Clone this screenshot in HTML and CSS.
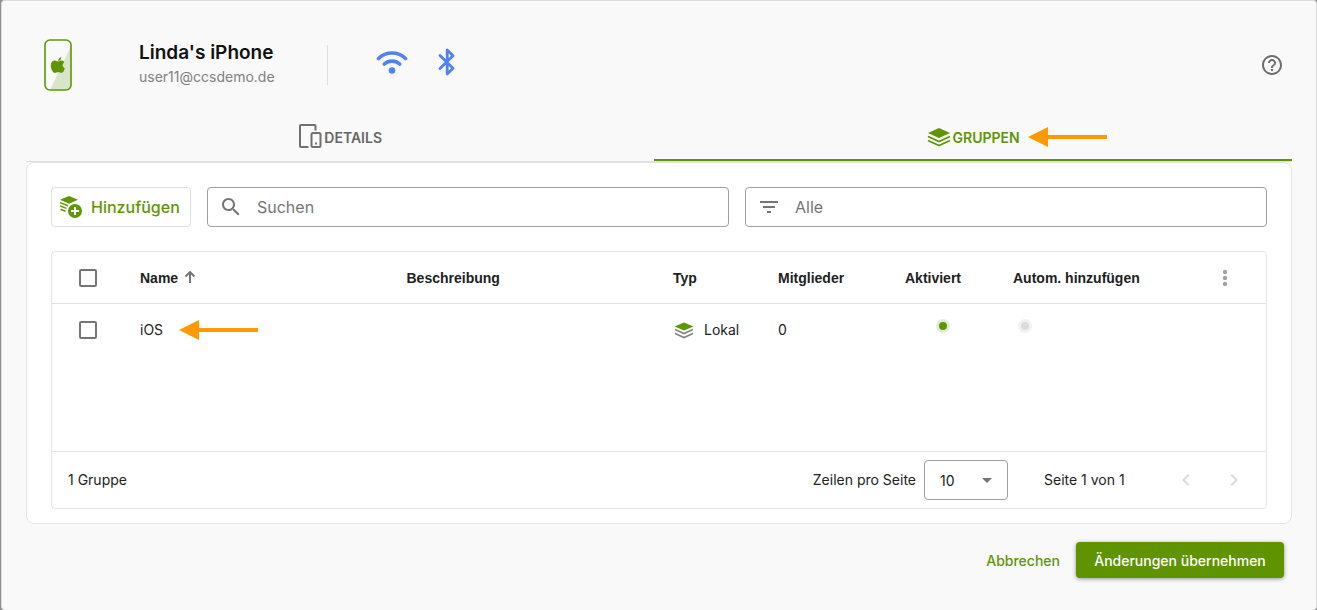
FILE: index.html
```html
<!DOCTYPE html>
<html lang="de">
<head>
    <meta charset="UTF-8">
    <meta name="viewport" content="width=device-width, initial-scale=1.0">
    <title>Linda's iPhone - Gruppen</title>
    <link rel="stylesheet" href="styles.css">
</head>
<body>

    <div class="dialog">
        <header class="device-header">
            <svg class="device-icon" width="28" height="52" viewBox="0 0 28 52" aria-hidden="true">
                <path d="M27 7v40a4 4 0 0 1-4 4H6z" fill="#d9e5c8"/>
                <rect x="1" y="1" width="26" height="50" rx="5" fill="none" stroke="#5f9606" stroke-width="1.6"/>
                <path d="M14.200 22c.1-2 1-3.300 3-4 .2 2-1 3.700-3 4z" fill="#5f9606"/>
                <path d="M14 22.500c1-.2 1.800-.9 3.300-.9 1.400 0 2.400.6 3.100 1.600-2.500 1.500-2.200 4.900.5 6-.6 2-1.900 4.800-3.600 4.800-1.200 0-1.600-.7-3.100-.7s-2 .7-3.200.7c-2.200 0-4.200-4.400-4.200-7.500 0-3.200 1.900-5 4.100-5 1.300 0 2.200.8 3.100 1z" fill="#5f9606"/>
            </svg>
            <div class="device-title">
                <h1>Linda's iPhone</h1>
                <p>user11@ccsdemo.de</p>
            </div>
            <div class="device-status">
                <svg width="32" height="26" viewBox="0 0 32 26" role="img" aria-label="WLAN">
                    <path d="M2.500 9.500C10 2.200 22 2.200 29.500 9.500M8.300 15c4.400-3.900 11-3.900 15.400 0" fill="none" stroke="#4f83f1" stroke-width="3.600" stroke-linecap="round"/>
                    <circle cx="16" cy="21.500" r="3.300" fill="#4f83f1"/>
                </svg>
                <svg width="18" height="28" viewBox="0 0 18 28" role="img" aria-label="Bluetooth">
                    <path d="M2 7.500l13 12.700-5.800 5.800V2L15 7.800 2 20.500" fill="none" stroke="#4f83f1" stroke-width="2.800" stroke-linecap="round" stroke-linejoin="round"/>
                </svg>
            </div>
            <button class="icon-button help" type="button" aria-label="Hilfe">
                <svg width="24" height="24" viewBox="0 0 24 24" fill="#6e6e6e">
                    <path d="M11 18h2v-2h-2v2zm1-16C6.480 2 2 6.480 2 12s4.480 10 10 10 10-4.480 10-10S17.520 2 12 2zm0 18c-4.410 0-8-3.590-8-8s3.590-8 8-8 8 3.590 8 8-3.590 8-8 8zm0-14c-2.210 0-4 1.790-4 4h2c0-1.100.9-2 2-2s2 .9 2 2c0 2-3 1.750-3 5h2c0-2.250 3-2.500 3-5 0-2.210-1.790-4-4-4z"/>
                </svg>
            </button>
        </header>

        <div class="tabs" role="tablist">
            <button class="tab" type="button" role="tab" aria-selected="false">
                <svg width="24" height="26" viewBox="0 0 24 26" fill="none" stroke="#707070" stroke-width="2" aria-hidden="true">
                    <path d="M10.500 23H3a1 1 0 0 1-1-1V2a1 1 0 0 1 1-1h13.500a1 1 0 0 1 1 1v4.500"/>
                    <rect x="13.500" y="9" width="9" height="14" rx="1.500"/>
                    <path d="M17 19.500h2"/>
                </svg>
                <span>DETAILS</span>
            </button>
            <button class="tab active" type="button" role="tab" aria-selected="true">
                <svg width="24" height="20" viewBox="0 0 24 20" aria-hidden="true">
                    <path d="M12 1l11 5-11 5L1 6z" fill="#5f9606"/>
                    <path d="M1 9.500l11 5 11-5M1 13.500l11 5 11-5" fill="none" stroke="#5f9606" stroke-width="1.700"/>
                </svg>
                <span>GRUPPEN</span>
                <svg class="arrow tab-arrow" width="79" height="20" viewBox="0 0 79 20" fill="#ff9900" aria-hidden="true">
                    <path d="M0 10L20 0v8h59v4H20v8z"/>
                </svg>
            </button>
        </div>

        <main class="card">
            <div class="toolbar">
                <button class="add-button" type="button">
                    <svg width="24" height="24" viewBox="0 0 24 24" aria-hidden="true">
                        <path d="M10 1l9 3.800-9 3.900-9-3.900z" fill="#5f9606"/>
                        <path d="M1 7.600l8 3.100M1 10.900l6.500 2.500M1.500 14.300l5 1.900" fill="none" stroke="#5f9606" stroke-width="1.500"/>
                        <circle cx="16" cy="16" r="7" fill="#5f9606"/>
                        <path d="M16 12v8M12 16h8" stroke="#fff" stroke-width="2"/>
                    </svg>
                    <span>Hinzufügen</span>
                </button>
                <label class="field">
                    <svg width="24" height="24" viewBox="0 0 24 24" fill="#757575" aria-hidden="true">
                        <path d="M15.500 14h-.79l-.28-.27C15.410 12.590 16 11.110 16 9.500 16 5.910 13.090 3 9.500 3S3 5.910 3 9.500 5.910 16 9.500 16c1.610 0 3.090-.59 4.230-1.570l.27.28v.79l5 4.990L20.490 19l-4.990-5zm-6 0C7.010 14 5 11.990 5 9.500S7.010 5 9.500 5 14 7.010 14 9.500 11.990 14 9.500 14z"/>
                    </svg>
                    <input type="text" placeholder="Suchen" aria-label="Suchen">
                </label>
                <label class="field">
                    <svg width="24" height="24" viewBox="0 0 24 24" fill="#757575" aria-hidden="true">
                        <path d="M10 18h4v-2h-4v2zM3 6v2h18V6H3zm3 7h12v-2H6v2z"/>
                    </svg>
                    <input type="text" placeholder="Alle" aria-label="Filter">
                </label>
            </div>

            <div class="table-box">
                <div class="table-scroll">
                    <table class="group-table">
                        <colgroup>
                            <col class="col-check">
                            <col>
                            <col>
                            <col class="col-type">
                            <col class="col-members">
                            <col class="col-active">
                            <col class="col-auto">
                            <col class="col-menu">
                        </colgroup>
                        <thead>
                            <tr>
                                <th class="center"><input class="check" type="checkbox" aria-label="Alle auswählen"></th>
                                <th>
                                    <div class="cell">
                                        <span>Name</span>
                                        <svg width="12" height="14" viewBox="0 0 12 14" fill="none" stroke="#757575" stroke-width="2" aria-hidden="true">
                                            <path d="M6 12V1M1.500 5.500L6 1l4.500 4.500"/>
                                        </svg>
                                    </div>
                                </th>
                                <th>Beschreibung</th>
                                <th>Typ</th>
                                <th>Mitglieder</th>
                                <th>Aktiviert</th>
                                <th>Autom. hinzufügen</th>
                                <th class="center">
                                    <button class="icon-button" type="button" aria-label="Spalten">
                                        <svg width="24" height="24" viewBox="0 0 24 24" fill="#a3a3a3">
                                            <circle cx="12" cy="6" r="2.200"/>
                                            <circle cx="12" cy="12" r="2.200"/>
                                            <circle cx="12" cy="18" r="2.200"/>
                                        </svg>
                                    </button>
                                </th>
                            </tr>
                        </thead>
                        <tbody>
                            <tr>
                                <td class="center"><input class="check" type="checkbox" aria-label="iOS auswählen"></td>
                                <td>
                                    <div class="cell wide">
                                        <span>iOS</span>
                                        <svg class="arrow" width="79" height="20" viewBox="0 0 79 20" fill="#ff9900" aria-hidden="true">
                                            <path d="M0 10L20 0v8h59v4H20v8z"/>
                                        </svg>
                                    </div>
                                </td>
                                <td></td>
                                <td>
                                    <div class="cell type">
                                        <svg width="22" height="17" viewBox="0 0 22 17" aria-hidden="true">
                                            <path d="M11 .5l9.500 4-9.500 4-9.500-4z" fill="#5f9606"/>
                                            <path d="M2 7.600l9 4 9-4M2 11.600l9 4 9-4" fill="none" stroke="#858585" stroke-width="1.600"/>
                                        </svg>
                                        <span>Lokal</span>
                                    </div>
                                </td>
                                <td>0</td>
                                <td class="center status"><span class="dot on"></span></td>
                                <td class="status"><span class="dot"></span></td>
                                <td></td>
                            </tr>
                        </tbody>
                    </table>
                </div>

                <div class="table-footer">
                    <span class="count">1 Gruppe</span>
                    <label for="pageSize">Zeilen pro Seite</label>
                    <div class="select-box">
                        <select id="pageSize">
                            <option>10</option>
                            <option>25</option>
                            <option>50</option>
                        </select>
                        <svg class="caret" width="10" height="5" viewBox="0 0 10 5" fill="#757575" aria-hidden="true">
                            <path d="M0 0h10L5 5z"/>
                        </svg>
                    </div>
                    <span class="page">Seite 1 von 1</span>
                    <div class="pager">
                        <button class="icon-button" type="button" aria-label="Vorherige Seite" disabled>
                            <svg width="24" height="24" viewBox="0 0 24 24" fill="#dadada">
                                <path d="M15.410 7.410L14 6l-6 6 6 6 1.410-1.410L10.830 12z"/>
                            </svg>
                        </button>
                        <button class="icon-button" type="button" aria-label="Nächste Seite" disabled>
                            <svg width="24" height="24" viewBox="0 0 24 24" fill="#dadada">
                                <path d="M10 6L8.590 7.410 13.170 12l-4.580 4.590L10 18l6-6z"/>
                            </svg>
                        </button>
                    </div>
                </div>
            </div>
        </main>

        <footer class="actions">
            <button class="text-button" type="button">Abbrechen</button>
            <button class="primary-button" type="button">Änderungen übernehmen</button>
        </footer>
    </div>

</body>
</html>
```

FILE: styles.css
```css
/* General Styles */
* {
    box-sizing: border-box;
}

body {
    font-family: Inter, 'Liberation Sans', sans-serif;
    font-size: 14px;
    line-height: 20px;
    color: #212121;
    background: #8f8f8f;
    margin: 0;
}

button, input, select {
    font-family: inherit;
    color: inherit;
}

button {
    border: none;
    background: none;
    padding: 0;
    cursor: pointer;
}

svg {
    display: block;
    flex: none;
}

/* Dialog */
.dialog {
    min-height: 100vh;
    margin-left: 1px;
    padding: 0 24px;
    background: #f9f9f9;
    border: 1px solid #dcdcdc;
    border-bottom: none;
    border-radius: 4px;
}

/* Device Header */
.device-header {
    display: flex;
    align-items: center;
    height: 112px;
    padding: 16px 8px 0 18px;
}

.device-title {
    height: 40px;
    margin-left: 67px;
    padding-right: 52px;
    border-right: 1px solid #dedede;
}

.device-title h1 {
    margin: -4px 0 2px;
    font-size: 19px;
    line-height: 24px;
    font-weight: 600;
    color: #111;
}

.device-title p {
    margin: 0;
    color: #808080;
}

.device-status {
    display: flex;
    align-items: center;
    gap: 30px;
    margin-left: 48px;
    margin-bottom: 6px;
}

.help {
    margin-left: auto;
}

/* Tabs */
.tabs {
    display: flex;
    height: 49px;
    border-bottom: 1px solid #dedede;
}

.tab {
    flex: 1 1 auto;
    display: flex;
    align-items: center;
    justify-content: center;
    gap: 2px;
    position: relative;
    padding-top: 2px;
    font-size: 14px;
    font-weight: 600;
    color: #666;
    border-bottom: 2px solid transparent;
}

.tab.active {
    color: #5f9606;
    border-bottom-color: #5f9606;
}

.tab-arrow {
    position: absolute;
    left: calc(50% + 55px);
}

/* Card */
.card {
    padding: 24px 24px 14px;
    background: #fff;
    border: 1px solid #e4e4e4;
    border-radius: 8px;
}

/* Toolbar */
.toolbar {
    display: flex;
    gap: 16px;
    margin-bottom: 24px;
}

.add-button {
    display: flex;
    align-items: center;
    gap: 8px;
    min-width: 140px;
    height: 40px;
    padding: 0 7px;
    font-size: 16px;
    font-weight: 500;
    color: #5f9606;
    border: 1px solid #dedede;
    border-radius: 4px;
}

.field {
    flex: 1;
    display: flex;
    align-items: center;
    gap: 12px;
    height: 40px;
    padding: 0 11px;
    border: 1px solid #9e9e9e;
    border-radius: 4px;
}

.field input {
    flex: 1;
    min-width: 0;
    padding: 0 0 0 2px;
    font-size: 16px;
    border: none;
    outline: none;
    background: none;
}

.field input::placeholder {
    color: #757575;
    opacity: 1;
}

/* Group Table */
.table-box {
    border: 1px solid #e4e4e4;
    border-radius: 4px;
}

.table-scroll {
    min-height: 199px;
}

.group-table {
    width: 100%;
    table-layout: fixed;
    border-collapse: separate;
    border-spacing: 0;
}

.group-table th, .group-table td {
    height: 52px;
    padding: 0 0 0 16px;
    text-align: left;
}

.group-table th {
    font-family: 'Liberation Sans', sans-serif;
    font-weight: bold;
    border-bottom: 1px solid #e0e0e0;
}

.group-table .center {
    padding: 0;
    text-align: center;
}

.group-table .status {
    padding-bottom: 8px;
}

.col-check { width: 72px; }
.col-type { width: 105px; }
.col-members { width: 127px; }
.col-active { width: 108px; }
.col-auto { width: 187px; }
.col-menu { width: 82px; }

.cell {
    display: flex;
    align-items: center;
    gap: 6px;
}

.cell.wide {
    gap: 16px;
}

.cell.type {
    gap: 9px;
}

.check {
    appearance: none;
    display: block;
    width: 18px;
    height: 18px;
    margin: 0 auto;
    border: 2px solid #757575;
    border-radius: 2px;
}

.check:checked {
    background: #5f9606;
    border-color: #5f9606;
}

/* Status Dots */
.dot {
    display: block;
    width: 14px;
    height: 14px;
    margin-left: 5px;
    background: #dcdcdc;
    border: 3px solid #f2f2f2;
    border-radius: 50%;
}

.dot.on {
    margin: 0 auto;
    background: #5f9606;
    border-color: #e3edd6;
}

/* Table Footer */
.table-footer {
    display: flex;
    align-items: center;
    height: 57px;
    padding: 0 20px 0 16px;
    border-top: 1px solid #e4e4e4;
}

.count {
    margin-right: auto;
}

.select-box {
    position: relative;
    margin: 0 36px 0 8px;
}

.select-box select {
    appearance: none;
    display: block;
    width: 84px;
    height: 40px;
    padding: 0 15px;
    font-size: 14px;
    background: none;
    border: 1px solid #9e9e9e;
    border-radius: 4px;
}

.caret {
    position: absolute;
    top: 18px;
    right: 16px;
    pointer-events: none;
}

.page {
    min-width: 86px;
}

.pager {
    display: flex;
    gap: 24px;
    margin-left: 44px;
}

.icon-button {
    display: inline-block;
    width: 24px;
    height: 24px;
    vertical-align: middle;
}

/* Actions */
.actions {
    display: flex;
    justify-content: flex-end;
    gap: 16px;
    padding: 18px 8px 30px;
}

.text-button, .primary-button {
    height: 36px;
    font-size: 14px;
    font-weight: 500;
    color: #5f9606;
}

.primary-button {
    min-width: 208px;
    padding: 0 16px;
    color: #fff;
    background: #5f9400;
    border-radius: 4px;
    box-shadow: 0 1px 4px rgba(0, 0, 0, 0.4);
}
```
